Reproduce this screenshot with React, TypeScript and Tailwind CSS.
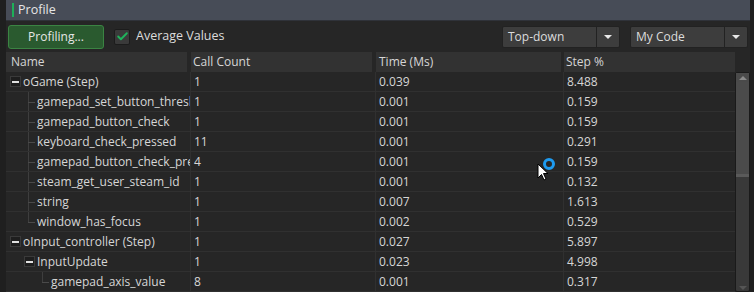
import { Check } from 'lucide-react';

type Row = {
  name: string;
  count: string;
  time: string;
  step: string;
  level: number;
  expandable?: boolean;
  last?: boolean;
};

const rows: Row[] = [
  { name: 'oGame (Step)', count: '1', time: '0.039', step: '8.488', level: 0, expandable: true },
  { name: 'gamepad_set_button_threshold', count: '1', time: '0.001', step: '0.159', level: 1 },
  { name: 'gamepad_button_check', count: '1', time: '0.001', step: '0.159', level: 1 },
  { name: 'keyboard_check_pressed', count: '11', time: '0.001', step: '0.291', level: 1 },
  { name: 'gamepad_button_check_pressed', count: '4', time: '0.001', step: '0.159', level: 1 },
  { name: 'steam_get_user_steam_id', count: '1', time: '0.001', step: '0.132', level: 1 },
  { name: 'string', count: '1', time: '0.007', step: '1.613', level: 1 },
  { name: 'window_has_focus', count: '1', time: '0.002', step: '0.529', level: 1, last: true },
  { name: 'oInput_controller (Step)', count: '1', time: '0.027', step: '5.897', level: 0, expandable: true },
  { name: 'InputUpdate', count: '1', time: '0.023', step: '4.998', level: 1, expandable: true },
  { name: 'gamepad_axis_value', count: '8', time: '0.001', step: '0.317', level: 2, last: true },
];

const font = { fontFamily: '"Open Sans", "Noto Sans", sans-serif' };

function Minus() {
  return (
    <div className="w-[11px] h-[11px] bg-[#1e1e1e] border border-[#3a3a3a] flex items-center justify-center shrink-0">
      <div className="w-[7px] h-[2px] bg-[#e0e0e0]" />
    </div>
  );
}

function NameCell({ row }: { row: Row }) {
  if (row.level === 0) {
    return (
      <div className="flex items-center h-full pl-[4px] gap-[2px] overflow-hidden">
        <Minus />
        <span className="whitespace-nowrap">{row.name}</span>
      </div>
    );
  }
  if (row.expandable) {
    return (
      <div className="flex items-center h-full pl-[18px] gap-[2px] overflow-hidden">
        <Minus />
        <span className="whitespace-nowrap">{row.name}</span>
      </div>
    );
  }
  // leaf: branch line then label
  const lineX = row.level === 1 ? 'pl-[22px]' : 'pl-[36px]';
  return (
    <div className={`flex items-center h-full overflow-hidden ${lineX}`}>
      <div className="relative w-[9px] h-full shrink-0">
        <div className={`absolute left-0 top-0 w-px bg-[#3e3e3e] ${row.last ? 'h-1/2' : 'h-full'}`} />
        <div className="absolute left-0 top-1/2 w-[7px] h-px bg-[#4a4a4a]" />
      </div>
      <span className="whitespace-nowrap">{row.name}</span>
    </div>
  );
}

function Dropdown({ label }: { label: string }) {
  return (
    <div className="flex w-[118px] h-[22px] bg-[#3d3d3d] border border-[#222] rounded-[2px]">
      <div className="flex-1 flex items-center pl-[5px] text-[12px] text-[#dcdcdc]">{label}</div>
      <div className="w-[23px] border-l border-[#222] flex items-center justify-center">
        <div className="w-0 h-0 border-l-[4px] border-r-[4px] border-t-[4px] border-l-transparent border-r-transparent border-t-[#e8e8e8]" />
      </div>
    </div>
  );
}

export default function App() {
  return (
    <div className="w-[754px] h-[292px] bg-[#1f1f1f] overflow-hidden flex text-[12px] text-[#d6d6d6]" style={font}>
      <div className="ml-[6px] w-[744px] flex flex-col bg-[#262626] relative">
        {/* title bar */}
        <div className="h-[21px] bg-[#474c57] flex items-center pl-[6px] gap-[4px] border-b border-[#2f3239]">
          <div className="w-[2px] h-[14px] bg-[#1eb059]" />
          <span className="text-[12.5px] text-[#e6e6e6]">Profile</span>
        </div>

        {/* toolbar */}
        <div className="h-[31px] flex items-center pl-[2px] pr-[2px]">
          <button className="w-[96px] h-[24px] bg-[#2a5a2f] border border-[#3b8443] rounded-[3px] text-[12px] text-[#e6e6e6] flex items-center justify-center">
            Profiling...
          </button>
          <div className="ml-[10px] w-[16px] h-[16px] bg-[#3a3a3a] border border-[#1c1c1c] rounded-[2px] flex items-center justify-center">
            <Check className="w-[13px] h-[13px] text-[#1fb35b]" strokeWidth={3.5} />
          </div>
          <span className="ml-[6px] text-[12.5px] text-[#dcdcdc]">Average Values</span>
          <div className="ml-auto flex gap-[10px]">
            <Dropdown label="Top-down" />
            <Dropdown label="My Code" />
          </div>
        </div>

        {/* table */}
        <div className="flex-1 flex">
          <div className="flex-1 flex flex-col">
            <div className="grid grid-cols-[185px_185px_188px_171px] h-[20px] bg-[#262626]">
              <div className="bg-[#323232] mr-[4px] flex items-center pl-[5px]">Name</div>
              <div className="bg-[#323232] mr-[4px] flex items-center pl-[2px]">Call Count</div>
              <div className="bg-[#323232] mr-[3px] flex items-center pl-[3px]">Time (Ms)</div>
              <div className="bg-[#323232] flex items-center pl-[2px]">Step %</div>
            </div>
            {rows.map((row, i) => (
              <div key={i} className="grid grid-cols-[185px_185px_188px_171px] h-[20px] bg-[#262626] border-b border-[#303030]">
                <div className="border-r border-[#303030] overflow-hidden">
                  <NameCell row={row} />
                </div>
                <div className="border-r border-[#303030] flex items-center pl-[3px]">{row.count}</div>
                <div className="border-r border-[#303030] flex items-center pl-[3px]">{row.time}</div>
                <div className="flex items-center pl-[3px]">{row.step}</div>
              </div>
            ))}
          </div>

          {/* scrollbar */}
          <div className="w-[15px] flex flex-col pt-[20px] bg-[#262626]">
            <div className="flex-1 flex flex-col border border-[#1a1a1a] rounded-[2px] bg-[#393939]">
              <div className="h-[9px] bg-[#4a4a4a] flex items-center justify-center">
                <div className="w-0 h-0 border-l-[4px] border-r-[4px] border-b-[4px] border-l-transparent border-r-transparent border-b-[#8a8a8a]" />
              </div>
              <div className="h-[95px] bg-[#4b4b4b] border-b-[3px] border-[#5a5a5a]" />
              <div className="flex-1" />
              <div className="h-[7px] flex items-center justify-center">
                <div className="w-0 h-0 border-l-[4px] border-r-[4px] border-t-[4px] border-l-transparent border-r-transparent border-t-[#555]" />
              </div>
            </div>
          </div>
        </div>

        {/* cursor + busy ring */}
        <div className="absolute left-[531px] top-[163px]">
          <svg width="14" height="20" viewBox="0 0 14 20">
            <path d="M1 1 L1 15 L4.5 11.5 L7 17 L9 16 L6.5 10.5 L11 10.5 Z" fill="#ffffff" stroke="#000" strokeWidth="1" />
          </svg>
        </div>
        <div className="absolute left-[537px] top-[158px] w-[12px] h-[12px] rounded-full border-[3px] border-[#1e9bf0]" />
      </div>
    </div>
  );
}
